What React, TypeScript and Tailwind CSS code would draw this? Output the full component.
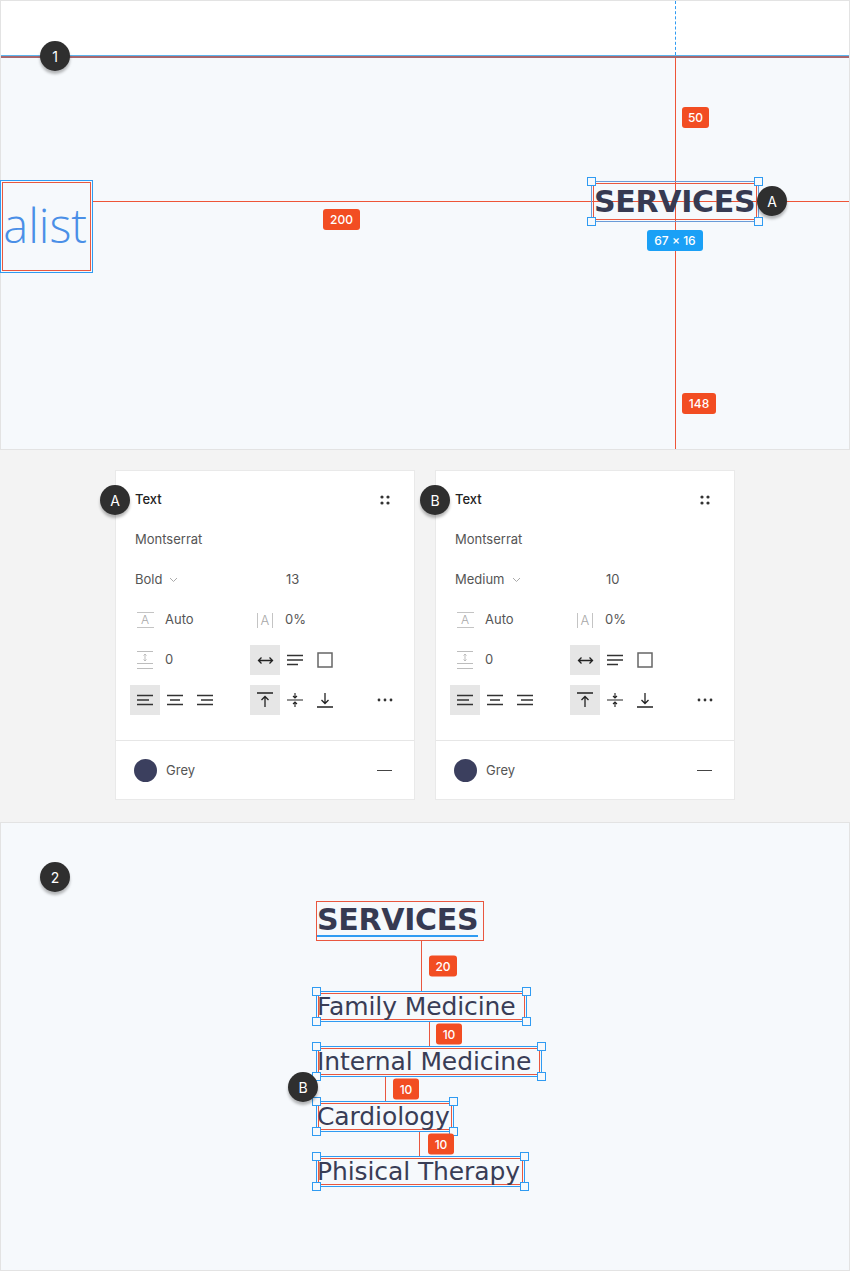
import type { ReactNode } from 'react'

const inter = "font-['Inter','Liberation_Sans',sans-serif]"
const mont = "font-['DejaVu_Sans','Open_Sans',sans-serif]"
const light = "font-['Open_Sans','Liberation_Sans',sans-serif]"

function Marker({ label, className }: { label: string; className: string }) {
  return (
    <div
      className={`absolute z-10 flex h-[30px] w-[30px] items-center justify-center rounded-full bg-[#2f2f2f] text-[14px] text-white shadow-[0_3px_3px_rgba(0,0,0,0.28)] ${inter} ${className}`}
    >
      {label}
    </div>
  )
}

function Badge({ children, className }: { children: ReactNode; className: string }) {
  return (
    <div
      className={`absolute flex h-[21px] items-center justify-center rounded-[3px] text-[12px] font-medium text-white ${inter} ${className}`}
    >
      {children}
    </div>
  )
}

function Handles() {
  const base = 'absolute h-[9px] w-[9px] border border-[#2f9bf2] bg-[#f6f9fc]'
  return (
    <>
      <span className={`${base} -left-[5px] -top-[5px]`} />
      <span className={`${base} -right-[5px] -top-[5px]`} />
      <span className={`${base} -bottom-[5px] -left-[5px]`} />
      <span className={`${base} -bottom-[5px] -right-[5px]`} />
    </>
  )
}

function Cell({ active, children }: { active?: boolean; children: ReactNode }) {
  return (
    <div
      className={`flex h-[30px] w-[30px] items-center justify-center ${active ? 'bg-[#e6e6e6]' : ''}`}
    >
      {children}
    </div>
  )
}

function AlignIcon({ d }: { d: string }) {
  return (
    <svg width="18" height="12" viewBox="0 0 18 12" fill="none" stroke="#333" strokeWidth="1.3">
      <path d={d} />
    </svg>
  )
}

function Panel({ tag, weight, size }: { tag: string; weight: string; size: string }) {
  return (
    <div className={`relative h-[330px] w-[300px] border border-[#e9e9e9] bg-white text-[13px] text-[#555] ${inter}`}>
      <Marker label={tag} className="-left-[16px] top-[14px]" />
      <div className="px-[14px] pb-[20px] pt-[9px]">
        <div className="flex h-[40px] items-center justify-between">
          <span className="pl-[5px] font-medium text-[#222]">Text</span>
          <Cell>
            <svg width="10" height="10" viewBox="0 0 10 10" fill="#333">
              <circle cx="2" cy="2" r="1.6" />
              <circle cx="8" cy="2" r="1.6" />
              <circle cx="2" cy="8" r="1.6" />
              <circle cx="8" cy="8" r="1.6" />
            </svg>
          </Cell>
        </div>
        <div className="flex h-[40px] items-center pl-[5px]">Montserrat</div>
        <div className="grid h-[40px] grid-cols-[120px_1fr_30px] items-center">
          <div className="flex items-center gap-[7px] pl-[5px]">
            {weight}
            <svg width="9" height="6" viewBox="0 0 9 6" fill="none" stroke="#aaa" strokeWidth="1">
              <path d="M1 1l3.5 3.5L8 1" />
            </svg>
          </div>
          <div className="pl-[36px]">{size}</div>
        </div>
        <div className="grid h-[40px] grid-cols-[120px_1fr_30px] items-center">
          <div className="flex items-center">
            <Cell>
              <span className="flex h-[16px] w-[17px] items-center justify-center border-y border-[#c4c4c4] text-[12px] font-light leading-none text-[#a8a8a8]">
                A
              </span>
            </Cell>
            <span className="pl-[5px]">Auto</span>
          </div>
          <div className="flex items-center">
            <Cell>
              <span className="flex h-[15px] items-center border-x border-[#c4c4c4] px-[3px] text-[13px] font-light leading-none text-[#a8a8a8]">
                A
              </span>
            </Cell>
            <span className="pl-[5px]">0%</span>
          </div>
        </div>
        <div className="grid h-[40px] grid-cols-[120px_1fr_30px] items-center">
          <div className="flex items-center">
            <Cell>
              <svg width="18" height="20" viewBox="0 0 18 20" fill="none" stroke="#bdbdbd" strokeWidth="1">
                <path d="M1 1.5h16M1 13.5h16M1 18.5h16M9 4v7M7.5 5.5L9 4l1.5 1.5M7.5 9.5L9 11l1.5-1.5" />
              </svg>
            </Cell>
            <span className="pl-[5px]">0</span>
          </div>
          <div className="flex items-center">
            <Cell active>
              <svg width="17" height="9" viewBox="0 0 17 9" fill="none" stroke="#222" strokeWidth="1.3">
                <path d="M1.5 4.5h14M4.5 1.5l-3 3 3 3M12.5 1.5l3 3-3 3" />
              </svg>
            </Cell>
            <Cell>
              <AlignIcon d="M1 1.5h16M1 6h16M1 10.5h11" />
            </Cell>
            <Cell>
              <svg width="16" height="16" viewBox="0 0 16 16" fill="none" stroke="#666" strokeWidth="1.5">
                <rect x="1" y="1" width="14" height="14" />
              </svg>
            </Cell>
          </div>
        </div>
        <div className="grid h-[40px] grid-cols-[120px_1fr_30px] items-center">
          <div className="flex items-center">
            <Cell active>
              <AlignIcon d="M1 1.5h16M1 6h12M1 10.5h16" />
            </Cell>
            <Cell>
              <AlignIcon d="M1 1.5h16M4 6h10M1 10.5h16" />
            </Cell>
            <Cell>
              <AlignIcon d="M1 1.5h16M5 6h12M1 10.5h16" />
            </Cell>
          </div>
          <div className="flex items-center">
            <Cell active>
              <svg width="18" height="16" viewBox="0 0 18 16" fill="none" stroke="#222" strokeWidth="1.3">
                <path d="M1 1h16M9 15V4.5M5.5 8L9 4.5 12.5 8" />
              </svg>
            </Cell>
            <Cell>
              <svg width="18" height="16" viewBox="0 0 18 16" fill="none" stroke="#222" strokeWidth="1.1">
                <path d="M1 8h16M9 1v5M7 4l2 2 2-2M9 15v-5M7 12l2-2 2 2" />
              </svg>
            </Cell>
            <Cell>
              <svg width="18" height="16" viewBox="0 0 18 16" fill="none" stroke="#222" strokeWidth="1.3">
                <path d="M1 15h16M9 1v10.5M5.5 8L9 11.5 12.5 8" />
              </svg>
            </Cell>
          </div>
          <Cell>
            <svg width="16" height="4" viewBox="0 0 16 4" fill="#333">
              <circle cx="2" cy="2" r="1.4" />
              <circle cx="8" cy="2" r="1.4" />
              <circle cx="14" cy="2" r="1.4" />
            </svg>
          </Cell>
        </div>
      </div>
      <div className="flex h-[60px] items-center justify-between border-t border-[#e6e6e6] pl-[18px] pr-[22px]">
        <div className="flex items-center gap-[9px]">
          <span className="h-[23px] w-[23px] rounded-full bg-[#3b3f5e]" />
          <span>Grey</span>
        </div>
        <span className="h-[1.5px] w-[15px] bg-[#444]" />
      </div>
    </div>
  )
}

function Item({ label, width }: { label: string; width: string }) {
  return (
    <div className={`relative h-[31px] border border-[#2f9bf2] p-px ${width}`}>
      <Handles />
      <div
        className={`flex h-full items-center whitespace-nowrap border border-[#e9573f] text-[25px] leading-none tracking-[-0.1px] text-[#393d56] ${mont}`}
      >
        <span className="-ml-[2px] -mt-[1px]">{label}</span>
      </div>
    </div>
  )
}

function Gap({ h, line, badge, label }: { h: string; line: string; badge: string; label: string }) {
  return (
    <div className={`relative w-full ${h}`}>
      <div className={`absolute bottom-0 top-0 border-l border-[#e9573f] ${line}`} />
      <Badge className={`top-1/2 w-[26px] -translate-y-1/2 bg-[#f24d22] ${badge}`}>{label}</Badge>
    </div>
  )
}

export default function App() {
  return (
    <div className="w-[850px] bg-white">
      {/* 1 */}
      <section className="relative flex h-[450px] flex-col border border-[#e3e3e3]">
        <div className="h-[54px] bg-white" />
        <div className="h-px bg-[#5db6ef]" />
        <div className="h-[2px] bg-[#a7686e]" />
        <div className="flex-1 bg-[#f6f9fc]" />

        <div className="absolute left-[674px] top-0 h-[54px] border-l border-dashed border-[#2f9bf2]" />
        <div className="absolute bottom-0 left-[674px] top-[57px] border-l border-[#ee5538]" />
        <div className="absolute left-[91px] right-0 top-[200px] border-t border-[#ee5538]" />

        <div className="absolute -left-px top-[179px] h-[93px] w-[93px] border border-[#2f9bf2] p-px">
          <div className="flex h-full items-center justify-end border border-[#e9573f] pr-[3px]">
            <span className={`mt-[-2px] whitespace-nowrap text-[47px] font-light leading-none text-[#4a8fe7] ${light}`}>
              alist
            </span>
          </div>
        </div>

        <div className="absolute left-[590px] top-[180px] h-[41px] w-[168px] border border-[#6a9bd8] p-px">
          <Handles />
          <div className="flex h-full items-center border border-[#e9573f]">
            <span className={`whitespace-nowrap text-[30px] font-bold leading-none tracking-[-0.3px] text-[#363a52] ${mont}`}>
              SERVICES
            </span>
          </div>
        </div>

        <Badge className="left-[322px] top-[208px] w-[37px] bg-[#f24d22]">200</Badge>
        <Badge className="left-[681px] top-[106px] w-[27px] bg-[#f24d22]">50</Badge>
        <Badge className="left-[681px] top-[392px] w-[34px] bg-[#f24d22]">148</Badge>
        <Badge className="left-[646px] top-[229px] w-[56px] bg-[#1aa0f6]">67 × 16</Badge>

        <Marker label="1" className="left-[39px] top-[40px]" />
        <Marker label="A" className="left-[756px] top-[185px]" />
      </section>

      {/* panels */}
      <section className="flex h-[372px] gap-[20px] bg-[#f3f3f3] pl-[115px] pt-[20px]">
        <Panel tag="A" weight="Bold" size="13" />
        <Panel tag="B" weight="Medium" size="10" />
      </section>

      {/* 2 */}
      <section className="relative h-[449px] border border-[#e3e3e3] bg-[#f6f9fc]">
        <Marker label="2" className="left-[39px] top-[39px]" />
        <Marker label="B" className="left-[287px] top-[249px]" />
        <div className="flex flex-col items-start pl-[315px] pt-[78px]">
          <div className="relative h-[40px] w-[168px] border border-[#e9573f]">
            <div className="flex h-full items-center">
              <span className={`mt-[-1px] whitespace-nowrap border-b-2 border-[#2f9bf2] text-[30px] font-bold leading-[30px] tracking-[-0.3px] text-[#363a52] ${mont}`}>
                SERVICES
              </span>
            </div>
          </div>
          <Gap h="h-[50px]" line="left-[105px]" badge="left-[113px] w-[28px]" label="20" />
          <Item label="Family Medicine" width="w-[211px]" />
          <Gap h="h-[24px]" line="left-[113px]" badge="left-[120px]" label="10" />
          <Item label="Internal Medicine" width="w-[226px]" />
          <Gap h="h-[24px]" line="left-[69px]" badge="left-[77px]" label="10" />
          <Item label="Cardiology" width="w-[138px]" />
          <Gap h="h-[24px]" line="left-[103px]" badge="left-[112px]" label="10" />
          <Item label="Phisical Therapy" width="w-[209px]" />
        </div>
      </section>
    </div>
  )
}
